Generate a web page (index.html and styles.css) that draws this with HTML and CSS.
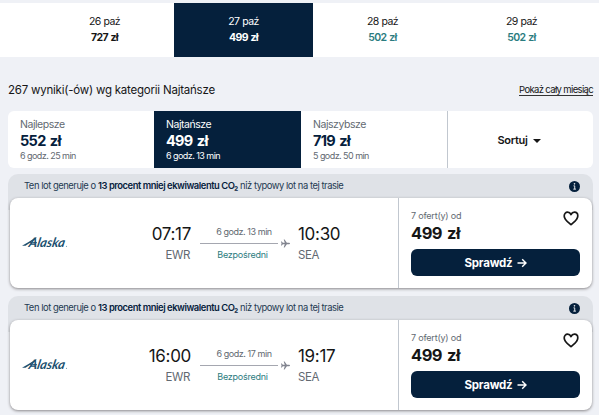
FILE: index.html
```
<!DOCTYPE html>
<html lang="pl">
<head>
  <meta charset="UTF-8" />
  <title>Wyniki wyszukiwania lotów</title>
  <link rel="stylesheet" href="styles.css">
</head>
<body>
  <svg class="sprite" width="0" height="0">
    <symbol id="info" viewBox="0 0 10 10">
      <circle cx="5" cy="5" r="5" fill="#05203c" />
      <path d="M4.100 4.400h1.100v3M3.900 7.400h2.400" stroke="#e3e6ea" stroke-width=".9" fill="none" />
      <circle cx="5" cy="2.600" r=".75" fill="#e3e6ea" />
    </symbol>
    <symbol id="heart" viewBox="0 0 16 15">
      <path d="M8 13.700C5.800 11.500 1.200 8.700 1.200 4.900 1.200 2.700 2.700 1.200 4.600 1.200 6.100 1.200 7.300 2.100 8 3.500 8.700 2.100 9.900 1.200 11.400 1.200c1.900 0 3.400 1.500 3.400 3.700 0 3.800-4.600 6.600-6.800 8.800z" fill="none" stroke="#161616" stroke-width="1.700" stroke-linejoin="round" />
    </symbol>
    <symbol id="plane" viewBox="0 0 10 10">
      <path d="M0 2.800h.9L2 4.300h2.200L3 .5h1l2.500 3.800H9q1 .2 1 .7t-1 .7H6.500L4 9.500H3l1.200-3.800H2L.9 7.200H0L.6 5z" fill="#81848f" />
    </symbol>
    <symbol id="arrow" viewBox="0 0 10 10">
      <path d="M.5 5h8.300M5.200 1.200L9 5 5.200 8.800" fill="none" stroke="#fff" stroke-width="1.400" />
    </symbol>
  </svg>

  <div class="dates">
    <div class="date"><span>26 paź</span><b>727 zł</b></div>
    <div class="date selected"><span>27 paź</span><b>499 zł</b></div>
    <div class="date low"><span>28 paź</span><b>502 zł</b></div>
    <div class="date low"><span>29 paź</span><b>502 zł</b></div>
  </div>

  <main>
    <div class="summary">
      <h1>267 wyniki(-ów) wg kategorii Najtańsze</h1>
      <a class="month-link">Pokaż cały miesiąc</a>
    </div>

    <div class="tabs">
      <div class="tab">
        <span class="tab-name">Najlepsze</span>
        <b class="tab-price">552 zł</b>
        <span class="tab-time">6 godz. 25 min</span>
      </div>
      <div class="tab active">
        <span class="tab-name">Najtańsze</span>
        <b class="tab-price">499 zł</b>
        <span class="tab-time">6 godz. 13 min</span>
      </div>
      <div class="tab">
        <span class="tab-name">Najszybsze</span>
        <b class="tab-price">719 zł</b>
        <span class="tab-time">5 godz. 50 min</span>
      </div>
      <div class="sort"><span>Sortuj</span><i class="caret"></i></div>
    </div>

    <section class="ticket">
      <div class="eco">
        <p>Ten lot generuje o <b>13 procent mniej ekwiwalentu CO₂</b> niż typowy lot na tej trasie</p>
        <svg class="info"><use href="#info" /></svg>
      </div>
      <div class="card">
        <div class="flight">
          <svg class="logo" viewBox="0 0 46 17">
            <path d="M0 11.800Q6 8.500 14.500 3L13.800 5Q8 8.800 3.500 11.800zM5 9.300Q10 7.300 15 8.200L15 9.200Q10 8.300 5 9.300z" />
            <text transform="skewX(-12)" x="9" y="13" textLength="36" lengthAdjust="spacingAndGlyphs">Alaska</text>
            <circle cx="44.500" cy="12.300" r=".6" />
          </svg>
          <div class="stop from"><span class="time">07:17</span><span class="code">EWR</span></div>
          <div class="route">
            <span class="duration">6 godz. 13 min</span>
            <div class="line"><svg class="plane"><use href="#plane" /></svg></div>
            <span class="direct">Bezpośredni</span>
          </div>
          <div class="stop"><span class="time">10:30</span><span class="code">SEA</span></div>
        </div>
        <div class="offer">
          <div class="offer-top">
            <div><span class="offers">7 ofert(y) od</span><b class="price">499 zł</b></div>
            <svg class="heart"><use href="#heart" /></svg>
          </div>
          <button><span>Sprawdź</span><svg class="arrow"><use href="#arrow" /></svg></button>
        </div>
      </div>
    </section>

    <section class="ticket">
      <div class="eco">
        <p>Ten lot generuje o <b>13 procent mniej ekwiwalentu CO₂</b> niż typowy lot na tej trasie</p>
        <svg class="info"><use href="#info" /></svg>
      </div>
      <div class="card">
        <div class="flight">
          <svg class="logo" viewBox="0 0 46 17">
            <path d="M0 11.800Q6 8.500 14.500 3L13.800 5Q8 8.800 3.500 11.800zM5 9.300Q10 7.300 15 8.200L15 9.200Q10 8.300 5 9.300z" />
            <text transform="skewX(-12)" x="9" y="13" textLength="36" lengthAdjust="spacingAndGlyphs">Alaska</text>
            <circle cx="44.500" cy="12.300" r=".6" />
          </svg>
          <div class="stop from"><span class="time">16:00</span><span class="code">EWR</span></div>
          <div class="route">
            <span class="duration">6 godz. 17 min</span>
            <div class="line"><svg class="plane"><use href="#plane" /></svg></div>
            <span class="direct">Bezpośredni</span>
          </div>
          <div class="stop"><span class="time">19:17</span><span class="code">SEA</span></div>
        </div>
        <div class="offer">
          <div class="offer-top">
            <div><span class="offers">7 ofert(y) od</span><b class="price">499 zł</b></div>
            <svg class="heart"><use href="#heart" /></svg>
          </div>
          <button><span>Sprawdź</span><svg class="arrow"><use href="#arrow" /></svg></button>
        </div>
      </div>
    </section>
  </main>
</body>
</html>
```
FILE: styles.css
```
* { box-sizing: border-box; margin: 0; padding: 0; }
body {
  height: 415px;
  padding-top: 3px;
  font-family: Inter, sans-serif;
  background: #eff1f6;
  color: #161616;
  overflow: hidden;
}
svg { display: block; flex: none; }
.sprite { position: absolute; }
.dates {
  display: grid;
  grid-template-columns: repeat(4, 139px);
  height: 54px;
  padding-left: 35px;
  background: #fff;
}
.date {
  display: flex;
  flex-direction: column;
  align-items: center;
  padding-top: 11px;
  font-size: 10.5px;
  line-height: 16px;
  letter-spacing: -0.6px;
  word-spacing: 0.6px;
}
.date.selected { background: #05203c; color: #fff; }
.date.low b { color: #2b7c80; font-weight: 600; }
main { padding: 0 6px 0 8px; }
.summary {
  display: flex;
  justify-content: space-between;
  height: 54px;
  padding-top: 25px;
}
h1 {
  font-size: 11.5px;
  font-weight: 400;
  line-height: 16px;
  letter-spacing: -0.22px;
}
.month-link {
  height: 14px;
  border-bottom: 1px solid #333;
  font-size: 9.5px;
  line-height: 16px;
  letter-spacing: -0.65px;
}
.tabs {
  display: grid;
  grid-template-columns: 146px 147px 146px 1fr;
  height: 57px;
  border-radius: 6px;
  background: #fff;
  overflow: hidden;
}
.tab {
  display: flex;
  flex-direction: column;
  padding: 6px 12px 0;
  color: #626971;
}
.tab-name { font-size: 10.5px; line-height: 15px; letter-spacing: -0.45px; }
.tab-price {
  color: #05203c;
  font-size: 14.5px;
  line-height: 17px;
  letter-spacing: -0.7px;
  word-spacing: 1.5px;
}
.tab-time { font-size: 9px; line-height: 14px; letter-spacing: -0.55px; }
.tab.active, .tab.active .tab-price { background: #05203c; color: #fff; }
.sort {
  display: flex;
  justify-content: center;
  align-items: center;
  gap: 5px;
  padding-right: 3px;
  border-left: 1px solid #c1c7cf;
  font-size: 11px;
  font-weight: 600;
  letter-spacing: -0.3px;
}
.caret {
  margin-top: 2px;
  border: 4px solid transparent;
  border-top: 4.5px solid #161616;
  border-bottom: 0;
}
.ticket { height: 116px; margin-top: 6px; }
.eco {
  display: flex;
  justify-content: space-between;
  height: 36px;
  padding: 4px 13px 0 16px;
  border-radius: 10px 10px 0 0;
  background: #dfe2e7;
  color: #243a52;
}
.eco p { font-size: 9.4px; line-height: 16px; letter-spacing: -0.45px; }
.eco b { color: #05203c; font-weight: 600; }
.info { width: 11px; height: 11px; margin-top: 3px; }
.card {
  display: flex;
  height: 90px;
  margin: -12px 1px 0 2px;
  border-radius: 8px;
  background: #fff;
  box-shadow: 0 1px 3px rgba(37,32,31,0.5);
}
.flight {
  display: flex;
  width: 388px;
  padding-left: 12px;
}
.logo { width: 46px; height: 17px; margin-top: 36px; fill: #20506f; }
.logo text { font: italic 700 13px Lato, sans-serif; }
.logo circle { fill: #6f9bab; }
.stop { display: flex; flex-direction: column; padding-top: 26px; }
.from { width: 122px; align-items: flex-end; }
.time { font-size: 17px; line-height: 21px; letter-spacing: -0.3px; }
.from .time { margin-right: -1px; }
.code { color: #626971; font-size: 11.5px; line-height: 20px; letter-spacing: -0.4px; }
.route {
  display: flex;
  flex-direction: column;
  align-items: center;
  width: 90px;
  margin: 0 8px 0 10px;
  padding-top: 26px;
  font-size: 9px;
  line-height: 16px;
  letter-spacing: -0.45px;
}
.duration { margin-right: 2px; color: #626971; }
.line {
  display: flex;
  justify-content: flex-end;
  align-items: center;
  width: 100%;
  height: 7px;
}
.line::before {
  content: "";
  flex: 1;
  height: 1px;
  margin-right: 3px;
  background: #a5a7b0;
}
.plane { width: 9px; height: 9px; }
.direct { margin-right: 5px; color: #2b7c80; letter-spacing: -0.25px; }
.offer {
  flex: 1;
  padding: 12px 12px 0;
  border-left: 1px solid #c1c7cf;
}
.offer-top { display: flex; justify-content: space-between; height: 39px; }
.offers {
  display: block;
  color: #626971;
  font-size: 9px;
  line-height: 12px;
  letter-spacing: -0.2px;
}
.price {
  display: block;
  font-size: 16.5px;
  line-height: 23px;
  letter-spacing: -0.5px;
  word-spacing: 1.5px;
}
.heart { width: 16px; height: 15px; margin: 1px 1px 0 0; }
button {
  display: flex;
  justify-content: center;
  align-items: center;
  gap: 4px;
  width: 169px;
  height: 27px;
  border: none;
  border-radius: 6px;
  background: #05203c;
  color: #fff;
  font: 700 11.5px Inter, sans-serif;
  letter-spacing: -0.2px;
}
.arrow { width: 10px; height: 10px; }
```
